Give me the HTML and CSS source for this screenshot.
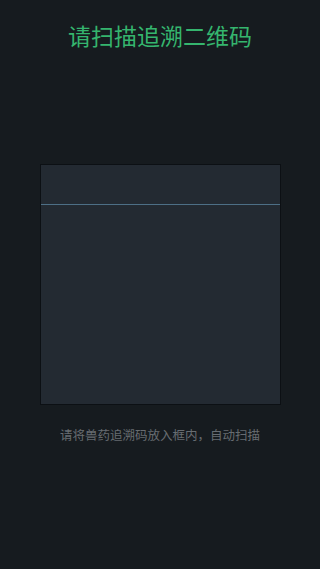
FILE: index.html
```html
<!DOCTYPE html>
<html lang="zh">
<head>
<meta charset="utf-8">
<meta name="viewport" content="width=device-width, initial-scale=1">
<link rel="stylesheet" href="styles.css">
</head>
<body>
<div class="page">
  <h1 class="title">请扫描追溯二维码</h1>
  <div class="scanner">
    <div class="scan-line"></div>
  </div>
  <p class="hint">请将兽药追溯码放入框内，自动扫描</p>
</div>
</body>
</html>
```
FILE: styles.css
```css
html, body {
  margin: 0;
  padding: 0;
  background: #161b1f;
}
.page {
  width: 320px;
  height: 569px;
  display: flex;
  flex-direction: column;
  align-items: center;
  font-family: "Noto Sans CJK SC", "Noto Sans", sans-serif;
}
.title {
  margin: 20px 0 0 0;
  height: 30px;
  line-height: 30px;
  font-size: 23px;
  font-weight: normal;
  color: #35b56e;
}
.scanner {
  margin-top: 114px;
  width: 239px;
  height: 239px;
  background: #232a32;
  border: 1px solid #0c1014;
  display: flex;
  flex-direction: column;
}
.scan-line {
  margin-top: 39px;
  height: 1px;
  background: #4d6f86;
}
.hint {
  margin: 21px 0 0 0;
  font-size: 12.5px;
  line-height: 18px;
  color: #676c71;
}
```
